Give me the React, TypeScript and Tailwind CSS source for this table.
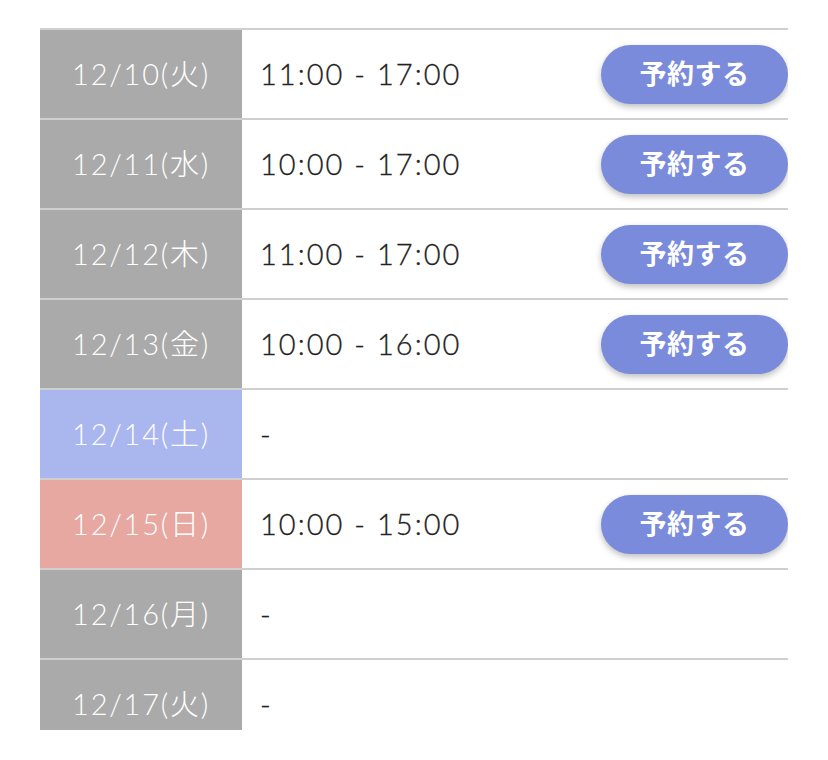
const rows = [
  { date: '12/10(火)', time: '11:00 - 17:00', tone: 'gray', open: true },
  { date: '12/11(水)', time: '10:00 - 17:00', tone: 'gray', open: true },
  { date: '12/12(木)', time: '11:00 - 17:00', tone: 'gray', open: true },
  { date: '12/13(金)', time: '10:00 - 16:00', tone: 'gray', open: true },
  { date: '12/14(土)', time: '-', tone: 'sat', open: false },
  { date: '12/15(日)', time: '10:00 - 15:00', tone: 'sun', open: true },
  { date: '12/16(月)', time: '-', tone: 'gray', open: false },
  { date: '12/17(火)', time: '-', tone: 'gray', open: false },
]

const toneClass: Record<string, string> = {
  gray: 'bg-[#aaaaaa]',
  sat: 'bg-[#aab6ee]',
  sun: 'bg-[#e6a8a1]',
}

export default function App() {
  return (
    <div
      className="min-h-[760px] bg-white px-[40px] pt-[28px]"
      style={{ fontFamily: 'Lato, "Noto Sans CJK JP", sans-serif' }}
    >
      <div className="h-[702px] w-[748px] overflow-hidden">
        {rows.map(r => (
          <div key={r.date} className="flex h-[90px] border-t-2 border-[#cfcfcf]">
            <div
              className={`flex w-[202px] shrink-0 items-center justify-center text-[29px] font-light tracking-[0.06em] text-white ${toneClass[r.tone]}`}
            >
              {r.date}
            </div>
            <div className="flex flex-1 items-center justify-between pl-[18px]">
              <span className="text-[29px] font-light tracking-[0.07em] text-[#222222] [-webkit-text-stroke:0.3px_#222222]">{r.time}</span>
              {r.open && (
                <button className="h-[59px] w-[187px] rounded-full bg-[#7a8bdc] text-[27px] font-bold tracking-[0.02em] text-white shadow-[0_3px_6px_rgba(0,0,0,0.25)]">
                  予約する
                </button>
              )}
            </div>
          </div>
        ))}
      </div>
    </div>
  )
}
